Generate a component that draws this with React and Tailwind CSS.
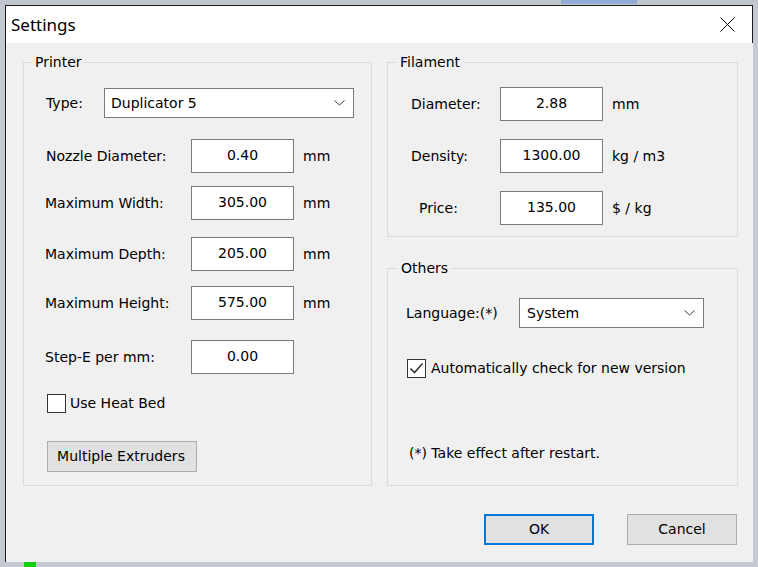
import React from 'react';

function Chevron() {
    return (
        <svg width="11" height="6" viewBox="0 0 11 6" className="shrink-0">
            <polyline points="0.5,0.5 5.5,5 10.5,0.5" fill="none" stroke="#3c3c3c" strokeWidth="1" />
        </svg>
    );
}

function NumBox({ value }) {
    return (
        <div className="flex h-[34px] w-[103px] shrink-0 items-center justify-center border border-[#7a7a7a] bg-white pb-[2px]">
            {value}
        </div>
    );
}

function Checkbox({ checked }) {
    return (
        <div className="h-[19px] w-[19px] shrink-0 border border-[#333333] bg-white">
            {checked && (
                <svg width="17" height="17" viewBox="0 0 17 17">
                    <polyline points="2.5,8.5 6.5,12.5 14.5,3.5" fill="none" stroke="#333333" strokeWidth="1.6" />
                </svg>
            )}
        </div>
    );
}

function Row({ label, value, unit, top, labelClass = 'w-[146px]' }) {
    return (
        <div className={`flex items-center ${top}`}>
            <span className={`shrink-0 ${labelClass}`}>{label}</span>
            <NumBox value={value} />
            <span className="ml-[9px]">{unit}</span>
        </div>
    );
}

export default function App() {
    return (
        <div className="relative h-[567px] w-[758px] overflow-hidden bg-[#c5cad2] pl-[5px] pt-[5px] font-['DejaVu_Sans',sans-serif] text-[14px] text-black">
            {/* bits of the app behind the dialog */}
            <div className="absolute left-0 top-0 h-[5px] w-[758px] bg-[#c1c5cc]" />
            <div className="absolute left-[561px] top-0 h-[4px] w-[76px] bg-[#93acd6]" />
            <div className="absolute left-[24px] top-[562px] h-[5px] w-[12px] bg-[#10d010]" />

            <div className="relative flex h-[557px] w-[748px] flex-col border-l border-t border-[#1b1b1b] bg-[#f0f0f0]">
                {/* Title bar */}
                <div className="flex h-[37px] shrink-0 items-center justify-between border-r border-[#1b1b1b] bg-white pl-[5px]">
                    <span className="font-['Noto_Sans',sans-serif] text-[17px] leading-none">Settings</span>
                    <svg width="15" height="15" viewBox="0 0 15 15" className="mr-[17px]">
                        <path d="M0.5 0.5 L14.5 14.5 M14.5 0.5 L0.5 14.5" stroke="#000" strokeWidth="1" />
                    </svg>
                </div>

                <div className="flex flex-col pl-[17px] pt-[9px]">
                    <div className="grid grid-cols-[349px_351px] gap-x-[15px]">
                        {/* Printer */}
                        <fieldset className="flex h-[434px] flex-col border border-[#dcdcdc]">
                            <legend className="ml-[8px] px-[3px] leading-[20px]">Printer</legend>
                            <div className="ml-[22px] mt-[16px] flex items-center">
                                <span className="w-[58px] shrink-0">Type:</span>
                                <div className="flex h-[30px] w-[250px] items-center justify-between border border-[#7a7a7a] bg-white pl-[6px] pr-[8px]">
                                    <span>Duplicator 5</span>
                                    <Chevron />
                                </div>
                            </div>
                            <div className="ml-[21px] flex flex-col">
                                <Row label="Nozzle Diameter:" value="0.40" unit="mm" top="mt-[21px] pl-[1px]" labelClass="w-[145px]" />
                                <Row label="Maximum Width:" value="305.00" unit="mm" top="mt-[13px]" />
                                <Row label="Maximum Depth:" value="205.00" unit="mm" top="mt-[17px]" />
                                <Row label="Maximum Height:" value="575.00" unit="mm" top="mt-[15px]" />
                                <Row label="Step-E per mm:" value="0.00" unit="" top="mt-[20px]" />
                            </div>
                            <div className="ml-[23px] mt-[19px] flex items-center gap-[4px]">
                                <Checkbox checked={false} />
                                <span>Use Heat Bed</span>
                            </div>
                            <button className="ml-[23px] mt-[27px] flex h-[31px] w-[150px] items-center justify-center border border-[#adadad] bg-[#e1e1e1] pb-[1px] pr-[2px]">
                                Multiple Extruders
                            </button>
                        </fieldset>

                        <div className="flex flex-col">
                            {/* Filament */}
                            <fieldset className="flex h-[185px] flex-col border border-[#dcdcdc]">
                                <legend className="ml-[9px] px-[3px] leading-[20px]">Filament</legend>
                                <Row label="Diameter:" value="2.88" unit="mm" top="mt-[15px] pl-[23px]" labelClass="w-[89px]" />
                                <Row label="Density:" value="1300.00" unit="kg / m3" top="mt-[18px] pl-[23px]" labelClass="w-[89px]" />
                                <Row label="Price:" value="135.00" unit="$ / kg" top="mt-[18px] pl-[31px]" labelClass="w-[81px]" />
                            </fieldset>

                            {/* Others */}
                            <fieldset className="mt-[21px] flex h-[228px] flex-col border border-[#dcdcdc]">
                                <legend className="ml-[10px] px-[3px] leading-[20px]">Others</legend>
                                <div className="ml-[18px] mt-[20px] flex items-center">
                                    <span className="w-[113px] shrink-0">Language:(*)</span>
                                    <div className="flex h-[30px] w-[185px] items-center justify-between border border-[#7a7a7a] bg-white pl-[7px] pr-[8px]">
                                        <span>System</span>
                                        <Chevron />
                                    </div>
                                </div>
                                <div className="ml-[19px] mt-[30px] flex items-center gap-[5px]">
                                    <Checkbox checked />
                                    <span>Automatically check for new version</span>
                                </div>
                                <p className="ml-[21px] mt-[64px] leading-[20px]">(*) Take effect after restart.</p>
                            </fieldset>
                        </div>
                    </div>

                    <div className="mt-[28px] flex justify-end gap-[33px] pr-[16px]">
                        <button className="flex h-[31px] w-[110px] items-center justify-center border-2 border-[#0078d7] bg-[#e1e1e1] pb-[1px]">
                            OK
                        </button>
                        <button className="flex h-[31px] w-[110px] items-center justify-center border border-[#adadad] bg-[#e1e1e1] pb-[1px]">
                            Cancel
                        </button>
                    </div>
                </div>
            </div>
        </div>
    );
}
